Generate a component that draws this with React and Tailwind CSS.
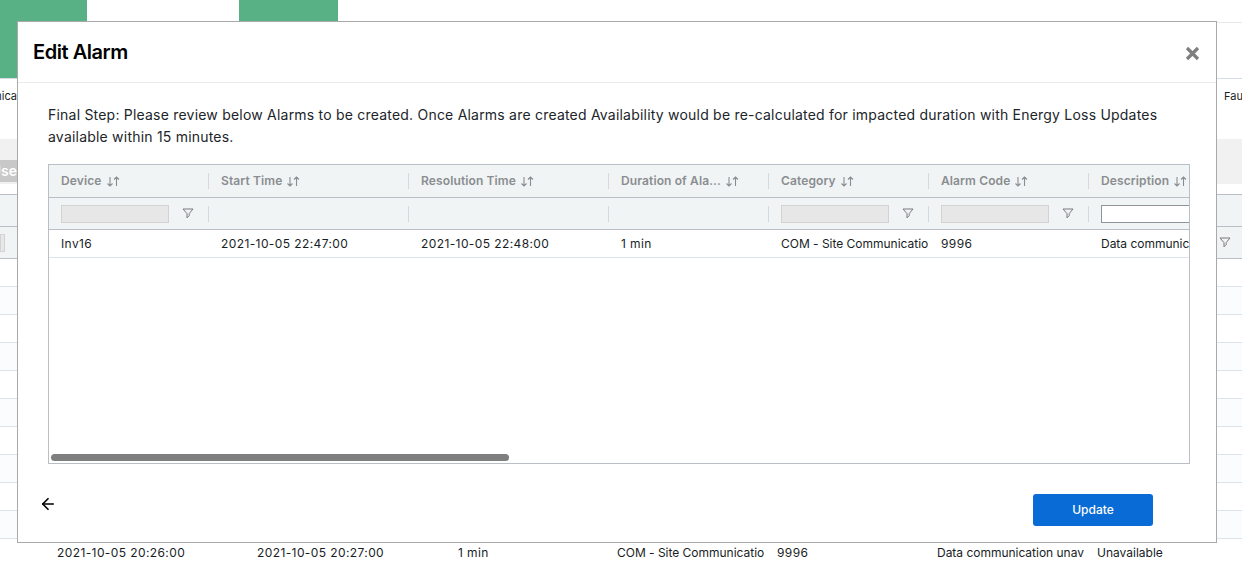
import { ArrowLeft } from "lucide-react";

const columns = [
  { title: "Device", width: "w-[160px]", filter: "disabled" },
  { title: "Start Time", width: "w-[200px]" },
  { title: "Resolution Time", width: "w-[200px]" },
  { title: "Duration of Ala...", width: "w-[160px]" },
  { title: "Category", width: "w-[160px]", filter: "disabled" },
  { title: "Alarm Code", width: "w-[160px]", filter: "disabled" },
  { title: "Description", width: "w-[160px]", filter: "text" },
];

const row = [
  { text: "Inv16", tracking: "tracking-[0.4px]" },
  { text: "2021-10-05 22:47:00", tracking: "tracking-[0.4px]" },
  { text: "2021-10-05 22:48:00", tracking: "tracking-[0.4px]" },
  { text: "1 min", tracking: "tracking-[0.4px]" },
  { text: "COM - Site Communication", tracking: "tracking-[-0.02px]" },
  { text: "9996", tracking: "tracking-[0.4px]" },
  { text: "Data communication unavailable", tracking: "tracking-[-0.02px]" },
];

function SortArrows() {
  return (
    <svg width="15" height="11" viewBox="0 0 15 11" fill="none" stroke="currentColor" strokeWidth="1.1" className="ml-[4px] shrink-0">
      <path d="M4 1v9M1.5 7.5 4 10l2.5-2.5M10.5 10V1M8 3.5 10.5 1 13 3.5" />
    </svg>
  );
}

function FilterIcon() {
  return (
    <svg width="12" height="11" viewBox="0 0 12 11" fill="none" stroke="#77797c" strokeWidth="1" className="shrink-0">
      <path d="M1 1h10L7.2 5.6v2L5 9.8V5.6z" />
    </svg>
  );
}

function Background() {
  return (
    <div className="h-[562px] w-[1242px] overflow-hidden bg-white font-['Inter',sans-serif] text-[12px] text-[#181d1f]">
      <div className="flex h-[79px] border-b border-[#d5dbe8]">
        <div className="w-[87px] bg-[#58b184]" />
        <div className="ml-[152px] w-[99px] bg-[#58b184]" />
        <div className="h-[23px] flex-1 border-b border-[#e8e8e8]" />
      </div>
      <div className="flex h-[60px] items-start justify-between pt-[9px] text-[11px]">
        <div className="flex w-[17px] justify-end overflow-hidden"><span>nica</span></div>
        <span className="w-[18px] overflow-hidden">Fault</span>
      </div>
      <div className="flex h-[45px] items-start bg-[#f1f1f1] pt-[21px]">
        <div className="flex h-[22px] w-[17px] justify-end overflow-hidden bg-[#c8c8c8] text-[14px] font-semibold leading-[22px] text-white">
          <span>Use</span>
        </div>
      </div>
      <div className="h-[10px]" />
      <div className="h-[33px] border-y border-[#babfc7] bg-[#f1f4f5]" />
      <div className="flex h-[32px] items-center justify-between border-b border-[#babfc7] bg-[#f1f4f5] pr-[11px]">
        <span className="h-[18px] w-[5px] border border-[#d3d3d3] bg-[#e7e7e7]" />
        <FilterIcon />
      </div>
      {[0, 1, 2, 3, 4, 5, 6, 7, 8, 9].map((i) => (
        <div key={i} className={`h-[28px] border-b border-[#dde2eb] ${i % 2 === 1 ? "bg-[#fbfcfe]" : "bg-white"}`} />
      ))}
      <div className="flex h-[28px] items-center pl-[57px]">
        <span className="w-[200px] tracking-[0.4px]">2021-10-05 20:26:00</span>
        <span className="w-[201px] tracking-[0.4px]">2021-10-05 20:27:00</span>
        <span className="w-[159px] tracking-[0.4px]">1 min</span>
        <div className="w-[160px]">
          <div className="w-[147px] overflow-hidden whitespace-nowrap tracking-[-0.02px]">COM - Site Communication</div>
        </div>
        <span className="w-[160px] tracking-[0.4px]">9996</span>
        <div className="w-[160px]">
          <div className="w-[147px] overflow-hidden whitespace-nowrap tracking-[-0.02px]">Data communication unavailable</div>
        </div>
        <span>Unavailable</span>
      </div>
    </div>
  );
}

export default function App() {
  return (
    <div className="relative h-[562px] w-[1242px] overflow-hidden">
      <Background />

      {/* modal */}
      <div className="absolute left-[17px] top-[21px] flex h-[522px] w-[1200px] flex-col border border-[#a9a9a9] bg-white font-['Inter',sans-serif] text-[#181d1f]">
        <div className="flex h-[61px] shrink-0 items-center justify-between border-b border-[#e9ecef] pl-[15px] pr-[16px]">
          <h2 className="text-[20px] font-semibold tracking-[-0.45px] text-black">Edit Alarm</h2>
          <svg width="15" height="15" viewBox="0 0 15 15" stroke="#7f7f7f" strokeWidth="3.2" className="mt-[3px]">
            <path d="M2 2l11 11M13 2 2 13" />
          </svg>
        </div>

        <div className="flex flex-1 flex-col px-[30px] pt-[21px]">
          <p className="w-[1130px] text-[14px] leading-[22px] tracking-[0.21px] text-[#212529]">
            Final Step: Please review below Alarms to be created. Once Alarms are created Availability would be re-calculated for impacted duration with Energy Loss Updates available within 15 minutes.
          </p>

          <div className="relative mt-[16px] h-[300px] w-[1142px] overflow-hidden border border-[#babfc7]">
            <div className="flex h-[33px] w-max border-b border-[#babfc7] bg-[#f1f4f5]">
              {columns.map((col, i) => (
                <div key={col.title} className={`flex items-center px-[12px] text-[12px] font-semibold tracking-[0.12px] text-[#8a8d90] ${col.width} ${i > 0 ? "relative before:absolute before:left-[-1px] before:top-[8px] before:h-[16px] before:w-px before:bg-[#d5d9dd]" : ""}`}>
                  <span className="whitespace-nowrap">{col.title}</span>
                  <SortArrows />
                </div>
              ))}
            </div>
            <div className="flex h-[32px] w-max border-b border-[#babfc7] bg-[#f1f4f5]">
              {columns.map((col, i) => (
                <div key={col.title} className={`flex items-center px-[12px] ${col.width} ${i > 0 ? "relative before:absolute before:left-[-1px] before:top-[8px] before:h-[16px] before:w-px before:bg-[#d5d9dd]" : ""}`}>
                  {col.filter === "disabled" && (
                    <>
                      <span className="h-[18px] w-[108px] border border-[#d3d3d3] bg-[#e7e7e7]" />
                      <span className="ml-[13px]"><FilterIcon /></span>
                    </>
                  )}
                  {col.filter === "text" && <span className="h-[18px] w-[108px] border border-[#8f9498] bg-white" />}
                </div>
              ))}
            </div>
            <div className="flex h-[28px] w-max border-b border-[#dde2eb] bg-white">
              {row.map((cell, i) => (
                <div key={cell.text} className={`flex items-center whitespace-nowrap pl-[12px] text-[12px] ${columns[i].width}`}>
                  <span className={`block w-[147px] overflow-hidden ${cell.tracking}`}>{cell.text}</span>
                </div>
              ))}
            </div>
            {/* horizontal scrollbar */}
            <div className="absolute bottom-[2px] left-[2px] h-[7px] w-[458px] rounded-full bg-[#7f7f7f]" />
          </div>

          <div className="mt-[30px] flex items-start justify-between">
            <ArrowLeft size={18} strokeWidth={2.2} className="-ml-[9px] mt-[1px] text-black" />
            <button className="mr-[33px] h-[32px] w-[120px] rounded-[3px] bg-[#096bd6] text-[12px] font-medium text-white">Update</button>
          </div>
        </div>
      </div>
    </div>
  );
}
